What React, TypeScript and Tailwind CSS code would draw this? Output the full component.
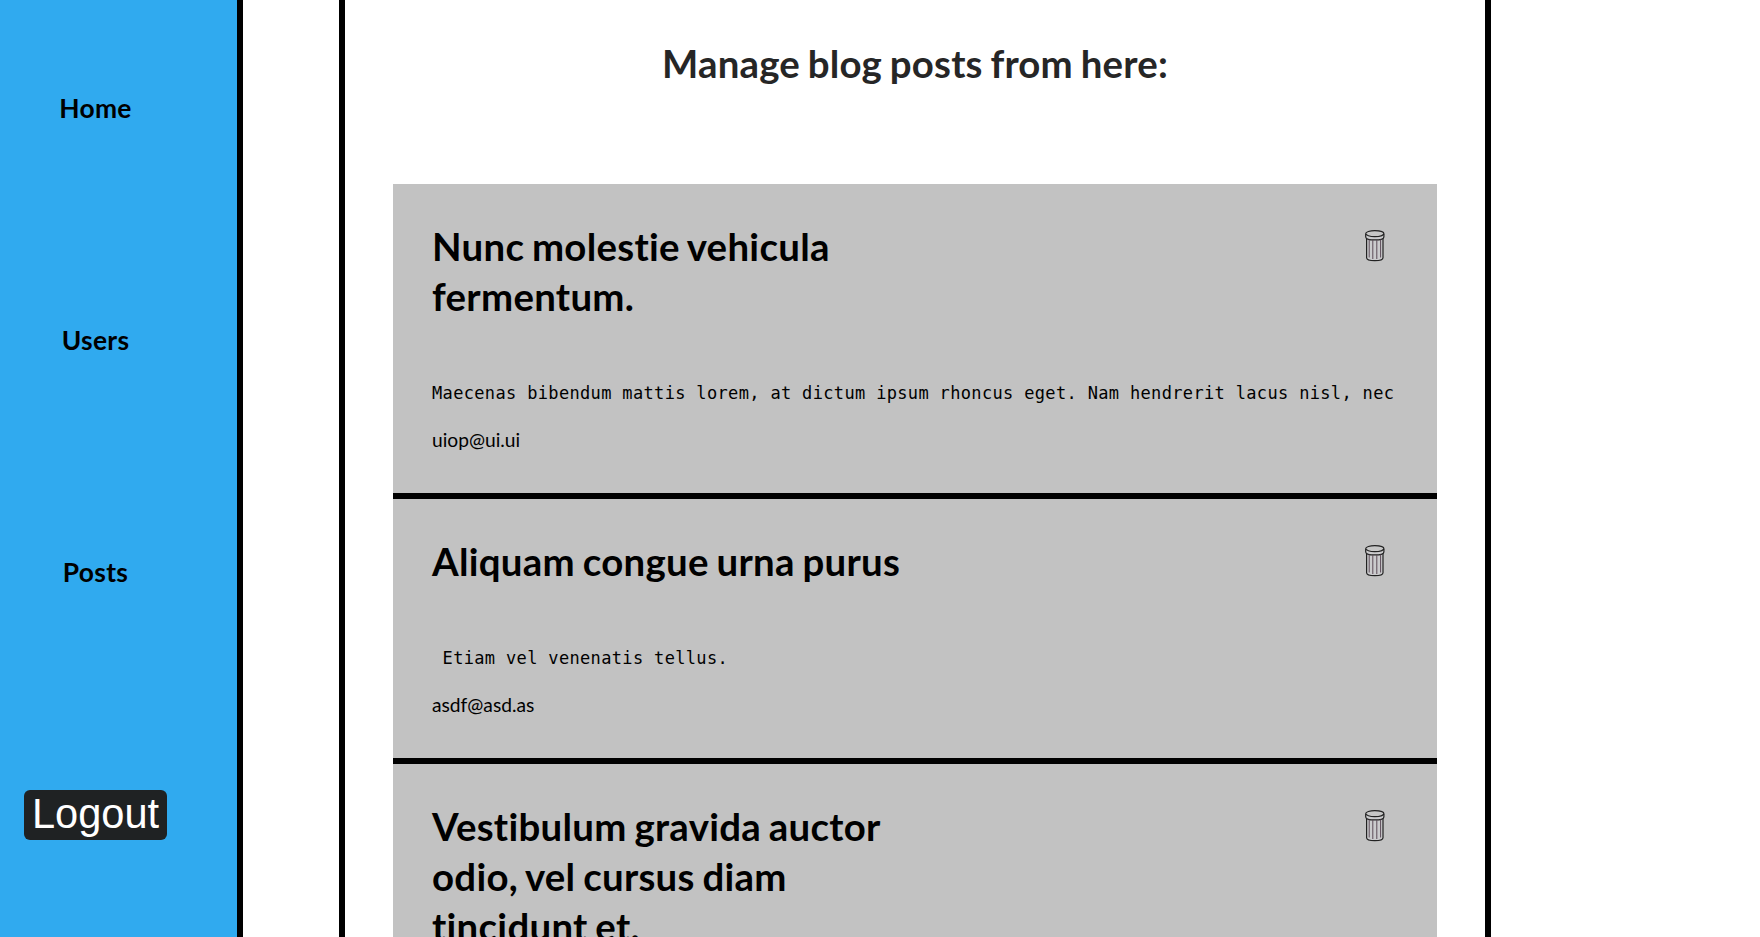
const posts = [
  { title: "Nunc molestie vehicula fermentum.", body: "Maecenas bibendum mattis lorem, at dictum ipsum rhoncus eget. Nam hendrerit lacus nisl, nec", email: "uiop@ui.ui" },
  { title: "Aliquam congue urna purus", body: " Etiam vel venenatis tellus.", email: "asdf@asd.as" },
  { title: "Vestibulum gravida auctor odio, vel cursus diam tincidunt et.", body: "", email: "" },
];

function Trash() {
  return (
    <svg width="20" height="33" viewBox="0 0 20 33" fill="none" stroke="#222" strokeWidth="1.2">
      <path d="M1.6 8v20.7c0 4 16.4 4 16.4 0V8" fill="#cbcbcd" />
      <path d="M.7 4.9v3c0 4 18.2 4 18.2 0v-3" fill="#cbcbcd" />
      <ellipse cx="9.8" cy="4.6" rx="9.1" ry="3" fill="#c6c6c6" />
      <path d="M4.2 10.5v18M7.8 11v19M11.8 11v19M15.6 10.5v18" strokeWidth="1" stroke="#5c4c58" />
    </svg>
  );
}

export default function App() {
  return (
    <div className="flex h-[937px] overflow-hidden bg-white font-['Lato',sans-serif] text-black [font-variant-ligatures:none]">
      <nav className="flex w-[243px] shrink-0 flex-col border-r-6 border-black bg-[#30aaef] pt-[92px] text-[26.4px] leading-8 font-bold tracking-[0.3px]">
        <div className="flex w-[191px] flex-col items-center gap-[200px]">
          <a>Home</a>
          <a>Users</a>
          <a>Posts</a>
        </div>
        <button className="mt-[202px] ml-6 h-[50px] w-[143px] rounded-[6px] bg-[#1f2223] pb-0.5 font-['Liberation_Sans',Arial,sans-serif] text-[41.6px] leading-[48px] font-normal tracking-normal text-white">
          Logout
        </button>
      </nav>
      <main className="ml-24 w-[1152px] shrink-0 border-x-6 border-black px-12">
        <h1 className="mt-[38px] mb-24 text-center text-[38.4px] leading-[50px] font-bold tracking-[0.2px] text-[#262626] [word-spacing:-1.8px]">Manage blog posts from here:</h1>
        {posts.map((p) => (
          <article key={p.title} className="border-b-6 border-black bg-[#c2c2c2] px-[39px] pt-[37px] pb-[41px]">
            <div className="flex items-start justify-between">
              <h2 className="w-[483px] text-[38.4px] leading-[50px] font-bold tracking-[0.29px] [word-spacing:-1.9px]">{p.title}</h2>
              <div className="mt-[8px] mr-[13px]"><Trash /></div>
            </div>
            <pre className="mt-[60px] font-['DejaVu_Sans_Mono',monospace] text-[17px] leading-6 tracking-[0.34px]">{p.body}</pre>
            <p className="mt-[23px] text-[19.2px] leading-6">{p.email}</p>
          </article>
        ))}
      </main>
    </div>
  );
}
